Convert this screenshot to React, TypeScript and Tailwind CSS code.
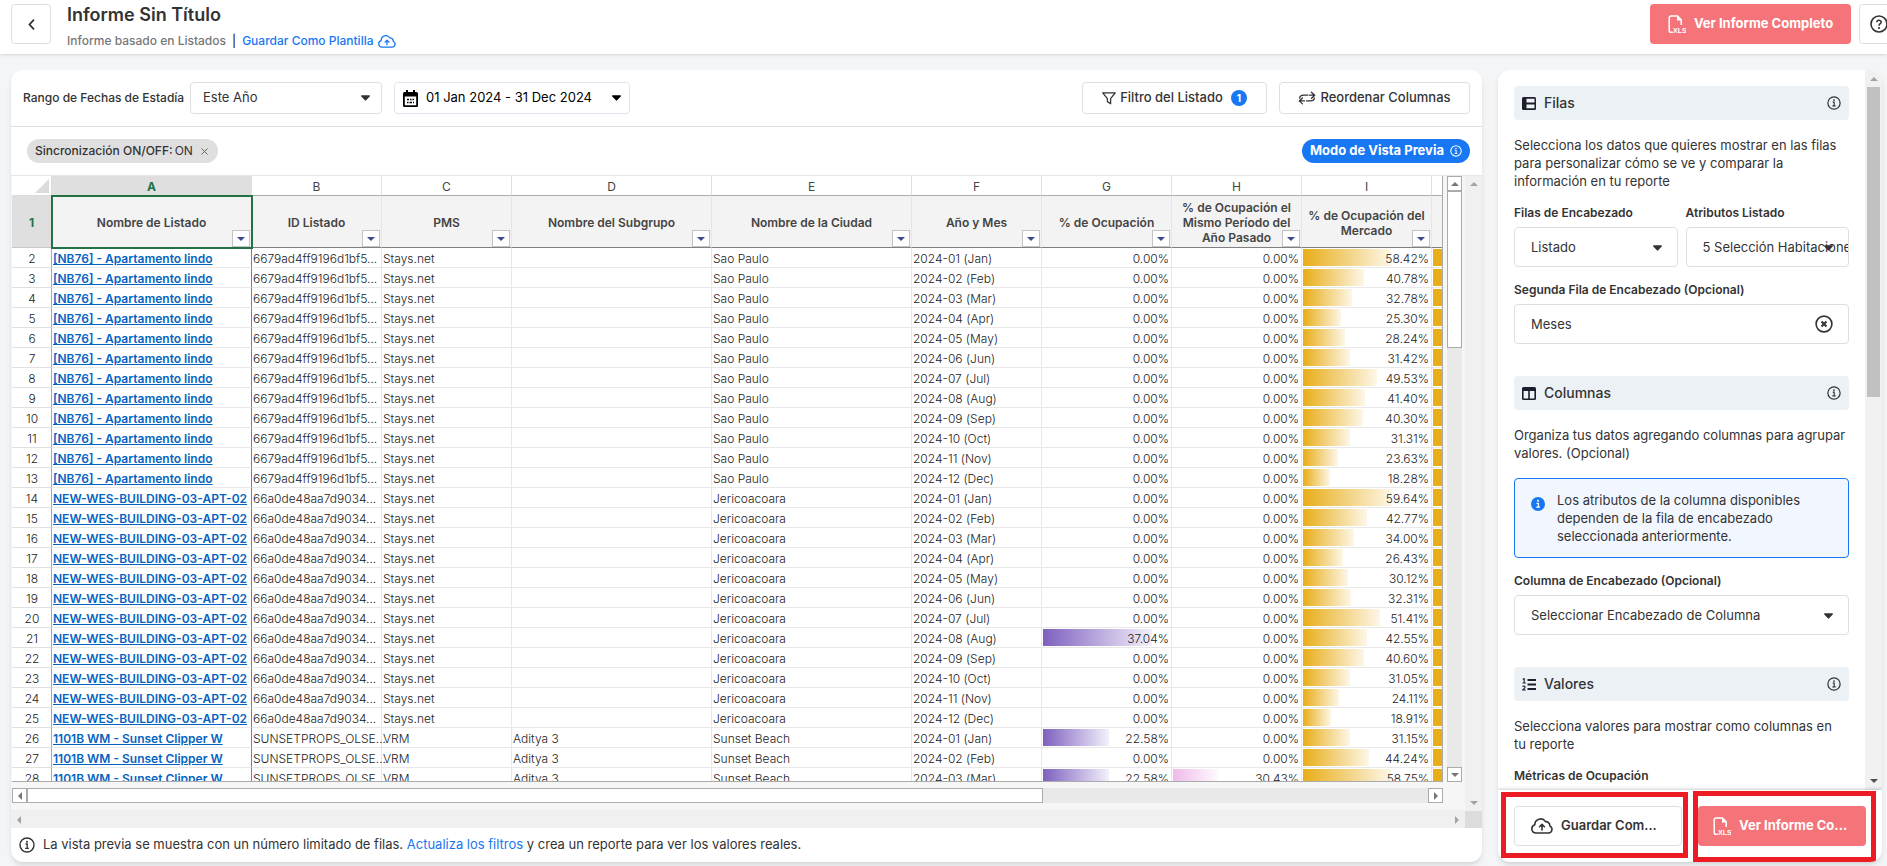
import { ReactNode } from "react";
import clsx from "clsx";

type Bar = "purple" | "pink" | "amber";

const MONTHS = [
  "01 (Jan)",
  "02 (Feb)",
  "03 (Mar)",
  "04 (Apr)",
  "05 (May)",
  "06 (Jun)",
  "07 (Jul)",
  "08 (Aug)",
  "09 (Sep)",
  "10 (Oct)",
  "11 (Nov)",
  "12 (Dec)",
];

const LISTINGS = [
  {
    name: "[NB76] - Apartamento lindo",
    id: "6679ad4ff9196d1bf5...",
    pms: "Stays.net",
    group: "",
    city: "Sao Paulo",
    market: [
      58.42, 40.78, 32.78, 25.3, 28.24, 31.42, 49.53, 41.4, 40.3, 31.31, 23.63,
      18.28,
    ],
    occupancy: [0, 0, 0, 0, 0, 0, 0, 0, 0, 0, 0, 0],
    lastYear: [0, 0, 0, 0, 0, 0, 0, 0, 0, 0, 0, 0],
  },
  {
    name: "NEW-WES-BUILDING-03-APT-02",
    id: "66a0de48aa7d9034...",
    pms: "Stays.net",
    group: "",
    city: "Jericoacoara",
    market: [
      59.64, 42.77, 34.0, 26.43, 30.12, 32.31, 51.41, 42.55, 40.6, 31.05, 24.11,
      18.91,
    ],
    occupancy: [0, 0, 0, 0, 0, 0, 0, 37.04, 0, 0, 0, 0],
    lastYear: [0, 0, 0, 0, 0, 0, 0, 0, 0, 0, 0, 0],
  },
  {
    name: "1101B WM - Sunset Clipper W",
    id: "SUNSETPROPS_OLSE...",
    pms: "VRM",
    group: "Aditya 3",
    city: "Sunset Beach",
    market: [31.15, 44.24, 58.75],
    occupancy: [22.58, 0, 22.58],
    lastYear: [0, 0, 30.43],
  },
];

const ROWS = LISTINGS.flatMap((l) =>
  l.market.map((market, i) => ({
    ...l,
    month: `2024-${MONTHS[i]}`,
    market,
    occupancy: l.occupancy[i],
    lastYear: l.lastYear[i],
  })),
);

const COLUMNS = [
  { letter: "A", title: "Nombre de Listado", width: "w-[200px]" },
  { letter: "B", title: "ID Listado", width: "w-[130px]" },
  { letter: "C", title: "PMS", width: "w-[130px]" },
  { letter: "D", title: "Nombre del Subgrupo", width: "w-[200px]" },
  { letter: "E", title: "Nombre de la Ciudad", width: "w-[200px]" },
  { letter: "F", title: "Año y Mes", width: "w-[130px]" },
  { letter: "G", title: "% de Ocupación", width: "w-[130px]" },
  {
    letter: "H",
    title: "% de Ocupación el Mismo Período del Año Pasado",
    width: "w-[130px]",
  },
  { letter: "I", title: "% de Ocupación del Mercado", width: "w-[130px]" },
  { letter: "", title: "", width: "w-[130px]" },
];

const BAR_COLORS = {
  purple: "from-[#7e60bf] to-[#f3f0fa]",
  pink: "from-[#efbbe9] to-[#fffbff]",
  amber: "from-[#e8ad18] to-[#fdf7e8]",
};

const BAR_SCALE = { purple: 2.94, pink: 1.51, amber: 1.5 };

const Caret = ({ className }: { className?: string }) => (
  <svg
    viewBox="0 0 10 6"
    className={clsx("pointer-events-none h-[6px] w-[9px]", className)}
    fill="currentColor"
    aria-hidden="true"
  >
    <path d="M.8 0h8.400c.7 0 1 .7.5 1.200L5.700 5.600a1 1 0 0 1-1.400 0L.3 1.200C-.2.7.1 0 .8 0z" />
  </svg>
);

const InfoIcon = ({ className }: { className?: string }) => (
  <svg
    viewBox="0 0 16 16"
    className={clsx("shrink-0", className)}
    fill="none"
    stroke="currentColor"
    aria-hidden="true"
  >
    <circle cx="8" cy="8" r="7" strokeWidth="1.400" />
    <path d="M6.500 7h1.700v4.200M6.200 11.300h3.700" strokeWidth="1.300" />
    <circle cx="8" cy="4.700" r="1" fill="currentColor" stroke="none" />
  </svg>
);

const CloudIcon = ({ className }: { className?: string }) => (
  <svg
    viewBox="0 0 22 16"
    className={clsx("shrink-0", className)}
    fill="none"
    stroke="currentColor"
    strokeWidth="1.600"
    strokeLinecap="round"
    strokeLinejoin="round"
    aria-hidden="true"
  >
    <path d="M5 15A4.200 4.200 0 0 1 3.800 6.800 5.800 5.800 0 0 1 14.500 3.600 4.200 4.200 0 0 1 18.900 8 3.700 3.700 0 0 1 17.500 15z" />
    <path d="M11 12V6.600M8.600 8.800 11 6.400l2.400 2.400" />
  </svg>
);

const XlsIcon = () => (
  <svg viewBox="0 0 18 19" className="h-[19px] w-[18px] shrink-0" aria-hidden="true">
    <path
      d="M4.800 17.300H3A1.800 1.800 0 0 1 1.200 15.500V2.800A1.800 1.800 0 0 1 3 1h6.500L13.200 4.700V10"
      fill="none"
      stroke="currentColor"
      strokeWidth="1.500"
    />
    <path d="M9 .5 13.900 5.500H9z" fill="currentColor" />
    <text
      x="5"
      y="18"
      fill="currentColor"
      className="font-['Liberation_Sans'] text-[7px] font-bold"
    >
      XLS
    </text>
  </svg>
);

const ScrollArrow = ({ direction }: { direction: "up" | "down" | "left" | "right" }) => (
  <svg
    viewBox="0 0 8 8"
    className={clsx("size-2", {
      "rotate-180": direction === "down",
      "-rotate-90": direction === "left",
      "rotate-90": direction === "right",
    })}
    fill="currentColor"
    aria-hidden="true"
  >
    <path d="M4 2 8 6H0z" />
  </svg>
);

const DataBar = ({ value, color }: { value: number; color: Bar }) => (
  <td className="relative border-b border-r border-[#e8e8e8] pr-[2px] text-right">
    {value > 0 && (
      <span
        className={clsx(
          "absolute bottom-px left-px top-px bg-linear-to-r/srgb",
          BAR_COLORS[color],
        )}
        style={{ width: Math.round(value * BAR_SCALE[color]) }}
      />
    )}
    <span className="relative">{value.toFixed(2)}%</span>
  </td>
);

const Sheet = () => (
  <div className="flex min-h-0 flex-1 border-t border-[#e6e6e6]">
    <div className="flex min-w-0 flex-1 flex-col">
      <div className="flex min-h-0 flex-1 flex-col border-b border-[#ececec] bg-[#f6f6f6] pb-[7px] pl-px pr-[3px]">
        <div className="flex min-h-0 flex-1 gap-1">
          <div className="min-w-0 flex-1 overflow-hidden border-b border-r border-[#ababab] bg-white">
            <table className="w-[1540px] table-fixed border-separate border-spacing-0 text-[12px] leading-[17px] text-[#444]">
              <thead>
                <tr className="h-5">
                  <th className="w-10 border-b border-r border-[#dcdcdc] p-0">
                    <svg viewBox="0 0 14 14" className="ml-auto mr-0.5 size-[14px]" aria-hidden="true">
                      <path d="M14 0v14H0z" fill="#dcdcdc" />
                    </svg>
                  </th>
                  {COLUMNS.map((c, i) => (
                    <th
                      key={i}
                      className={clsx(
                        "border-b border-r border-b-[#ababab] border-r-[#e0e0e0] px-0 pb-0 pt-0.5",
                        c.width,
                        i === 0 ? "bg-[#dfdfdf] font-bold text-[#217346]" : "font-normal",
                      )}
                    >
                      {c.letter}
                    </th>
                  ))}
                </tr>
                <tr className="h-[52px]">
                  <th className="border-b border-r border-[#c8c8c8] bg-[#dfdfdf] px-0 pb-0 pt-0.5 font-bold text-[#217346]">
                    1
                  </th>
                  {COLUMNS.map((c, i) => (
                    <th
                      key={i}
                      className={clsx(
                        "relative border-b border-r border-b-[#808080] border-r-[#e6e6e6] bg-[#f3f3f3] px-1.5 pb-0 pt-0.5 font-semibold leading-[15px]",
                        i === 0 &&
                          "z-10 outline-2 -outline-offset-1 outline-[#217346]",
                      )}
                    >
                      {c.title}
                      {c.title && (
                        <button
                          aria-label={`Filtrar ${c.title}`}
                          className="absolute bottom-0 right-px flex h-[17px] w-[18px] items-center justify-center border border-[#c4c4c4] bg-white text-[#3b4a8c]"
                        >
                          <ScrollArrow direction="down" />
                        </button>
                      )}
                    </th>
                  ))}
                </tr>
              </thead>
              <tbody className="font-light text-[#222]">
                {ROWS.map((row, i) => (
                  <tr
                    key={i}
                    className="h-5 *:h-5 *:whitespace-nowrap *:pb-0 *:pl-px *:pt-0.5"
                  >
                    <td className="border-b border-r border-b-[#e0e0e0] border-r-[#ababab] text-center">
                      {i + 2}
                    </td>
                    <td className="border-b border-r border-b-[#e8e8e8] border-r-[#808080]">
                      <a href="#" className="font-semibold text-[#0563c1] underline">
                        {row.name}
                      </a>
                    </td>
                    <td className="border-b border-r border-[#e8e8e8]">{row.id}</td>
                    <td className="border-b border-r border-[#e8e8e8]">{row.pms}</td>
                    <td className="border-b border-r border-[#e8e8e8]">{row.group}</td>
                    <td className="border-b border-r border-[#e8e8e8]">{row.city}</td>
                    <td className="border-b border-r border-[#e8e8e8]">{row.month}</td>
                    <DataBar value={row.occupancy} color="purple" />
                    <DataBar value={row.lastYear} color="pink" />
                    <DataBar value={row.market} color="amber" />
                    <td className="relative border-b border-[#e8e8e8]">
                      <span className="absolute inset-px bg-[#e8ad18]" />
                    </td>
                  </tr>
                ))}
              </tbody>
            </table>
          </div>
          <div className="flex w-[15px] flex-col bg-[#e9e9e9] text-[#777]">
            <span className="flex h-[15px] items-center justify-center border border-[#ababab] bg-white">
              <ScrollArrow direction="up" />
            </span>
            <span className="h-[157px] border border-[#ababab] bg-white" />
            <span className="mt-auto flex h-[15px] items-center justify-center border border-[#ababab] bg-white">
              <ScrollArrow direction="down" />
            </span>
          </div>
        </div>
        <div className="mr-[19px] mt-1.5 flex h-[15px] bg-[#e9e9e9] text-[#777]">
          <span className="flex w-[15px] items-center justify-center border border-[#ababab] bg-white">
            <ScrollArrow direction="left" />
          </span>
          <span className="w-[71%] border border-[#ababab] bg-white" />
          <span className="ml-auto flex w-[15px] items-center justify-center border border-[#ababab] bg-white">
            <ScrollArrow direction="right" />
          </span>
        </div>
      </div>
      <div className="flex h-[17px] items-center justify-between bg-[#f0f0f0] px-1 text-[#a3a3a3]">
        <ScrollArrow direction="left" />
        <ScrollArrow direction="right" />
      </div>
    </div>
    <div className="flex w-[17px] flex-col items-center bg-[#f0f0f0] pt-1 text-[#a3a3a3]">
      <ScrollArrow direction="up" />
      <span className="mb-1 mt-auto">
        <ScrollArrow direction="down" />
      </span>
      <span className="h-[17px] w-full bg-[#dcdcdc]" />
    </div>
  </div>
);

const SectionHeader = ({ icon, title }: { icon: ReactNode; title: string }) => (
  <div className="flex h-[34px] items-center rounded bg-[#ecf1f6] px-2">
    {icon}
    <h2 className="ml-2 text-[14px] font-medium">{title}</h2>
    <button className="ml-auto" aria-label={`Información sobre ${title}`}>
      <InfoIcon className="size-[14px]" />
    </button>
  </div>
);

const Field = ({
  id,
  label,
  value,
  clearable,
}: {
  id: string;
  label: string;
  value: string;
  clearable?: boolean;
}) => (
  <div className="min-w-0 flex-1">
    <label htmlFor={id} className="block text-[12px] font-semibold leading-[18px]">
      {label}
    </label>
    <div className="relative mt-[5px]">
      <select
        id={id}
        className="h-10 w-full appearance-none overflow-hidden rounded border border-[#dfdfdf] bg-white pl-4 text-[13px]"
      >
        <option>{value}</option>
      </select>
      {clearable ? (
        <button aria-label="Quitar selección" className="absolute right-4 top-[11px]">
          <svg
            viewBox="0 0 18 18"
            className="size-[18px]"
            fill="none"
            stroke="currentColor"
            aria-hidden="true"
          >
            <circle cx="9" cy="9" r="7.900" strokeWidth="1.600" />
            <path d="m6.500 6.500 5 5m0-5-5 5" strokeWidth="2" />
          </svg>
        </button>
      ) : (
        <Caret className="absolute right-4 top-[18px]" />
      )}
    </div>
  </div>
);

const Sidebar = () => (
  <aside className="flex w-96 shrink-0 flex-col overflow-hidden rounded-xl bg-white shadow-md">
    <div className="flex min-h-0 flex-1">
      <div className="min-w-0 flex-1 overflow-hidden p-4 text-[13px] leading-[18px]">
        <SectionHeader
          title="Filas"
          icon={
            <svg viewBox="0 0 14 13" className="h-[13px] w-[14px]" aria-hidden="true">
              <rect width="14" height="13" rx="1.500" fill="#1d1d2b" />
              <path d="M4.500 1.800h8v3.800h-8zM4.500 7.400h8v3.800h-8z" fill="#ecf1f6" />
            </svg>
          }
        />
        <p className="mt-4">
          Selecciona los datos que quieres mostrar en las filas para personalizar
          cómo se ve y comparar la información en tu reporte
        </p>
        <div className="mt-3.5 flex gap-2">
          <Field id="filas" label="Filas de Encabezado" value="Listado" />
          <Field
            id="atributos"
            label="Atributos Listado"
            value="5 Selección Habitaciones"
          />
        </div>
        <div className="mt-3.5">
          <Field
            id="segunda"
            label="Segunda Fila de Encabezado (Opcional)"
            value="Meses"
            clearable
          />
        </div>
        <div className="mt-8">
          <SectionHeader
            title="Columnas"
            icon={
              <svg viewBox="0 0 14 13" className="h-[13px] w-[14px]" aria-hidden="true">
                <rect width="14" height="13" rx="1.500" fill="#1d1d2b" />
                <path d="M1.600 4h4.600v7.400H1.600zM7.800 4h4.600v7.400H7.800z" fill="#ecf1f6" />
              </svg>
            }
          />
        </div>
        <p className="mt-4">
          Organiza tus datos agregando columnas para agrupar valores. (Opcional)
        </p>
        <div className="mt-4 flex gap-3 rounded border border-[#1877f2] bg-[#f2f7ff] px-4 py-3">
          <svg viewBox="0 0 14 14" className="mt-1.5 size-[14px] shrink-0" aria-hidden="true">
            <circle cx="7" cy="7" r="7" fill="#1877f2" />
            <path
              d="M5.500 6.300h1.900v3.700M5.300 10.200h3.700"
              stroke="#fff"
              strokeWidth="1.300"
              fill="none"
            />
            <circle cx="7" cy="3.800" r="1" fill="#fff" />
          </svg>
          <p>
            Los atributos de la columna disponibles dependen de la fila de
            encabezado seleccionada anteriormente.
          </p>
        </div>
        <div className="mt-3.5">
          <Field
            id="columna"
            label="Columna de Encabezado (Opcional)"
            value="Seleccionar Encabezado de Columna"
          />
        </div>
        <div className="mt-8">
          <SectionHeader
            title="Valores"
            icon={
              <svg viewBox="0 0 14 13" className="h-[13px] w-[14px]" aria-hidden="true">
                <path d="M5.500 2h8.500M5.500 6.500h8.500M5.500 11h8.500" stroke="#1d1d2b" strokeWidth="1.800" />
                <path
                  d="M.7 1.300 2.200.7v4M.5 5h3.300M.6 8.700C1 7.700 3.400 7.900 3.100 9.400 2.900 10.400 1 11.300.7 12h3"
                  fill="none"
                  stroke="#1d1d2b"
                  strokeWidth="1.100"
                />
              </svg>
            }
          />
        </div>
        <p className="mt-4 pr-3">
          Selecciona valores para mostrar como columnas en tu reporte
        </p>
        <p className="mt-3.5 text-[12px] font-semibold">Métricas de Ocupación</p>
      </div>
      <div className="flex w-[17px] flex-col items-center bg-[#f1f1f1] py-[5px] text-[#a3a3a3]">
        <ScrollArrow direction="up" />
        <span className="mt-1 h-[310px] w-[13px] bg-[#c1c1c1]" />
        <span className="mt-auto text-[#505050]">
          <ScrollArrow direction="down" />
        </span>
      </div>
    </div>
    <div className="flex gap-4 p-4 text-[13px] font-semibold shadow-[0_-1px_3px_rgba(0,0,0,0.2)]">
      <div className="relative min-w-0 flex-1">
        <button className="flex h-10 w-full items-center gap-2 rounded border border-[#dfdfdf] px-4">
          <CloudIcon className="h-4 w-[22px]" />
          Guardar Com...
        </button>
        <span className="pointer-events-none absolute -bottom-3 -left-[13px] -right-1.5 -top-3.5 border-5 border-[#ed1c24]" />
      </div>
      <div className="relative min-w-0 flex-1">
        <button className="flex h-10 w-full items-center gap-2 rounded bg-[#f47479] px-[15px] font-bold text-white">
          <XlsIcon />
          Ver Informe Co...
        </button>
        <span className="pointer-events-none absolute -bottom-4 -left-[5px] -right-2.5 -top-[15px] border-5 border-[#ed1c24]" />
      </div>
    </div>
  </aside>
);

const Header = () => (
  <header className="relative flex h-[54px] shrink-0 items-start bg-white pl-[11px] pt-1 shadow">
    <button
      aria-label="Volver"
      className="flex size-10 items-center justify-center rounded border border-[#dfdfdf]"
    >
      <svg
        viewBox="0 0 7 11"
        className="h-[11px] w-[7px]"
        fill="none"
        stroke="currentColor"
        strokeWidth="1.800"
        aria-hidden="true"
      >
        <path d="M6 .7 1.500 5.500 6 10.300" />
      </svg>
    </button>
    <div className="ml-4">
      <h1 className="text-[18px] font-semibold leading-[22px]">Informe Sin Título</h1>
      <p className="mt-1.5 flex items-center text-[12px] font-medium leading-[18px] text-[#777]">
        Informe basado en Listados
        <span className="mx-1.5 text-[#333]">|</span>
        <a href="#" className="flex items-center gap-1 text-[#1877f2]">
          Guardar Como Plantilla
          <CloudIcon className="h-[13px] w-[18px]" />
        </a>
      </p>
    </div>
    <button className="ml-auto flex h-10 w-[201px] items-center justify-center gap-2 rounded bg-[#f47479] text-[13px] font-bold text-white">
      <XlsIcon />
      Ver Informe Completo
    </button>
    <button
      aria-label="Ayuda"
      className="-mr-3 ml-2 flex size-10 items-center justify-center rounded border border-[#dfdfdf]"
    >
      <svg viewBox="0 0 18 18" className="size-[18px]" fill="none" stroke="currentColor" aria-hidden="true">
        <circle cx="9" cy="9" r="8" strokeWidth="1.600" />
        <path d="M6.800 7.200C6.800 4.500 11.300 4.700 11.200 7.200 11.100 8.700 9 8.700 9 10.800" strokeWidth="1.600" />
        <circle cx="9" cy="13" r="1.100" fill="currentColor" stroke="none" />
      </svg>
    </button>
  </header>
);

const Toolbar = () => (
  <div className="flex h-[57px] shrink-0 items-center border-b border-[#dfdfdf] px-3">
    <label htmlFor="rango" className="w-[167px] text-[12px] font-medium">
      Rango de Fechas de Estadía
    </label>
    <div className="relative w-[192px]">
      <select
        id="rango"
        className="h-8 w-full appearance-none rounded border border-[#dfdfdf] bg-white pl-3 text-[13px]"
      >
        <option>Este Año</option>
      </select>
      <Caret className="absolute right-3 top-[13px]" />
    </div>
    <button className="ml-3 flex h-8 w-[236px] items-center rounded border border-[#dfe5ef] px-2 text-[13px] text-black">
      <svg viewBox="0 0 15 17" className="h-[17px] w-[15px]" aria-hidden="true">
        <path
          d="M3 0h2v2h5V0h2v2h1.500A1.500 1.500 0 0 1 15 3.500v12a1.500 1.500 0 0 1-1.500 1.500h-12A1.500 1.500 0 0 1 0 15.500v-12A1.500 1.500 0 0 1 1.500 2H3z"
          fill="currentColor"
        />
        <path d="M1.800 6.500h11.400v8.700H1.800z" fill="#fff" />
        <path
          d="M4 9.500h2M7 9.500h1.500M9.500 9.500H11M4 12.500h1.500M6.500 12.500H9M10 12.500h1"
          stroke="currentColor"
          strokeWidth="1.500"
        />
      </svg>
      <span className="ml-2">01 Jan 2024 - 31 Dec 2024</span>
      <Caret className="ml-auto" />
    </button>
    <button className="ml-auto flex h-8 w-[185px] items-center justify-center gap-1 rounded border border-[#dfdfdf] text-[13px] font-medium">
      <svg
        viewBox="0 0 14 13"
        className="h-[13px] w-[14px]"
        fill="none"
        stroke="currentColor"
        strokeWidth="1.300"
        strokeLinejoin="round"
        aria-hidden="true"
      >
        <path d="M.8.8h12.400L8.600 6.600v5.200L5.400 9.600v-3z" />
      </svg>
      Filtro del Listado
      <span className="ml-1 flex size-4 items-center justify-center rounded-full bg-[#1877f2] text-[10px] font-bold text-white">
        1
      </span>
    </button>
    <button className="ml-3 flex h-8 w-[191px] items-center justify-center gap-1 rounded border border-[#dfdfdf] text-[13px] font-medium">
      <svg
        viewBox="0 0 18 14"
        className="h-[14px] w-[18px]"
        fill="none"
        stroke="currentColor"
        strokeWidth="1.300"
        strokeLinecap="round"
        strokeLinejoin="round"
        aria-hidden="true"
      >
        <path d="M1.700 7.200C1.700 4.600 4 4.200 6 4.200h3.800M11.500 4.200h5M13.400 1.200 16.700 4.200l-3.200 3" />
        <path d="M16.300 7C16.300 9.400 14 9.900 12 9.900H8.500M6.500 9.900H1.300M4.500 7 1.300 9.900l3.200 3" />
      </svg>
      Reordenar Columnas
    </button>
  </div>
);

export default function App() {
  return (
    <div className="flex h-screen flex-col overflow-hidden bg-[#f3f5f7] font-['Inter','Liberation_Sans',sans-serif] text-[#333]">
      <Header />
      <div className="flex min-h-0 flex-1 gap-4 pb-1 pl-[11px] pr-[5px] pt-4">
        <main className="flex min-w-0 flex-1 flex-col overflow-hidden rounded-xl bg-white shadow-md">
          <Toolbar />
          <div className="flex h-12 shrink-0 items-center justify-between pl-4 pr-3">
            <span className="flex h-6 items-center rounded-full bg-[#dfdfdf] px-2 text-[12px]">
              <span className="font-medium">Sincronización ON/OFF:</span>
              <span className="ml-0.5">ON</span>
              <button aria-label="Quitar filtro" className="ml-2 mr-0.5">
                <svg viewBox="0 0 7 7" className="size-[7px]" stroke="#666" aria-hidden="true">
                  <path d="m.5.500 6 6m0-6-6 6" />
                </svg>
              </button>
            </span>
            <button className="flex h-6 items-center gap-1.5 rounded-full bg-[#1877f2] px-2 text-[13px] font-bold text-white">
              Modo de Vista Previa
              <InfoIcon className="size-3" />
            </button>
          </div>
          <Sheet />
          <footer className="flex h-[34px] shrink-0 items-center gap-2 px-2 text-[13px]">
            <InfoIcon className="size-4" />
            <p>
              La vista previa se muestra con un número limitado de filas.{" "}
              <a href="#" className="text-[#1877f2]">
                Actualiza los filtros
              </a>{" "}
              y crea un reporte para ver los valores reales.
            </p>
          </footer>
        </main>
        <Sidebar />
      </div>
    </div>
  );
}
